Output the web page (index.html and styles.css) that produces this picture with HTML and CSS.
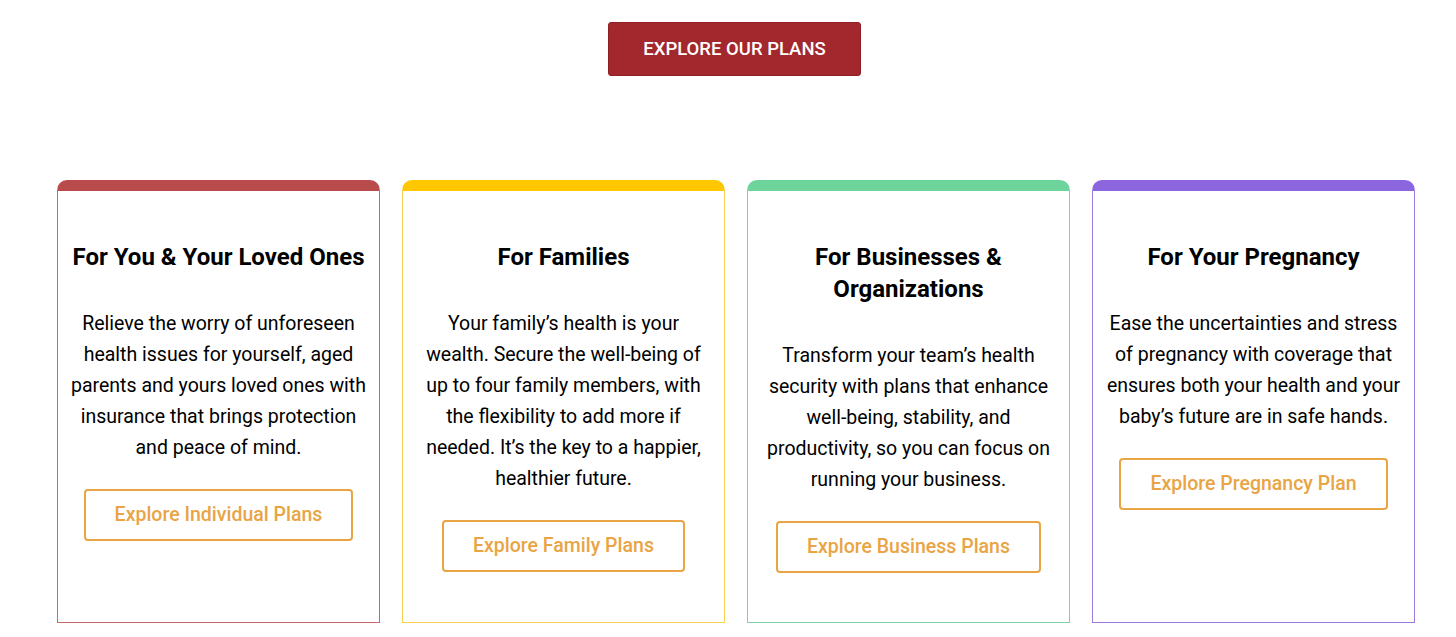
FILE: index.html
```html
<!DOCTYPE html>
<html lang="en">
<head>
    <meta charset="UTF-8">
    <meta name="viewport" content="width=device-width, initial-scale=1.0">
    <title>Our Plans</title>
    <link rel="stylesheet" href="styles.css">
</head>
<body>
    <div class="hero">
        <a href="#plans" class="cta">Explore Our Plans</a>
    </div>

    <div class="plans" id="plans">
        <div class="plan red">
            <h2>For You &amp; Your Loved Ones</h2>
            <p>Relieve the worry of unforeseen health issues for yourself, aged parents and yours loved ones with insurance that brings protection and peace of mind.</p>
            <a href="#" class="plan-link">Explore Individual Plans</a>
        </div>

        <div class="plan yellow">
            <h2>For Families</h2>
            <p>Your family’s health is your wealth. Secure the well-being of up to four family members, with the flexibility to add more if needed. It’s the key to a happier, healthier future.</p>
            <a href="#" class="plan-link">Explore Family Plans</a>
        </div>

        <div class="plan green">
            <h2>For Businesses &amp; Organizations</h2>
            <p>Transform your team’s health security with plans that enhance well-being, stability, and productivity, so you can focus on running your business.</p>
            <a href="#" class="plan-link">Explore Business Plans</a>
        </div>

        <div class="plan purple">
            <h2>For Your Pregnancy</h2>
            <p>Ease the uncertainties and stress of pregnancy with coverage that ensures both your health and your baby’s future are in safe hands.</p>
            <a href="#" class="plan-link">Explore Pregnancy Plan</a>
        </div>
    </div>
</body>
</html>
```

FILE: styles.css
```css
body {
    font-family: Roboto, "Liberation Sans", Arial, sans-serif;
    margin: 0;
    background-color: #fff;
    color: #000;
}

.hero {
    display: flex;
    justify-content: center;
    padding: 22px 0 0 13px;
}

.cta {
    display: block;
    width: 253px;
    height: 54px;
    line-height: 52px;
    box-sizing: border-box;
    text-align: center;
    background-color: #a3282d;
    border: 1px solid #8f1f24;
    border-radius: 3px;
    color: white;
    font-size: 18.5px;
    font-weight: 500;
    text-transform: uppercase;
    text-decoration: none;
}

.plans {
    display: grid;
    grid-template-columns: repeat(4, 323px);
    column-gap: 22px;
    margin: 104px 0 0 57px;
}

.plan {
    display: flex;
    flex-direction: column;
    align-items: center;
    height: 443px;
    box-sizing: border-box;
    padding: 50px 12px 0;
    border: 1px solid;
    border-top-width: 11px;
    border-radius: 10px 10px 0 0;
    text-align: center;
}

.plan h2 {
    margin: 0;
    font-size: 24px;
    font-weight: 700;
    line-height: 32px;
}

.plan p {
    margin: 35px 0 26px;
    font-size: 19.5px;
    line-height: 31px;
}

.plan-link {
    display: block;
    height: 52px;
    line-height: 48px;
    box-sizing: border-box;
    padding: 0 29px;
    border: 2px solid #e9a444;
    border-radius: 4px;
    color: #e9a444;
    font-size: 19.5px;
    font-weight: 500;
    text-decoration: none;
}

.red {
    border-color: #c9666a;
    border-top-color: #b94b4c;
}

.yellow {
    border-color: #f6d24e;
    border-top-color: #ffc700;
}

.green {
    border-color: #7fd3a6;
    border-top-color: #6dd49b;
}

.purple {
    border-color: #9a7ade;
    border-top-color: #8b66de;
}
```
